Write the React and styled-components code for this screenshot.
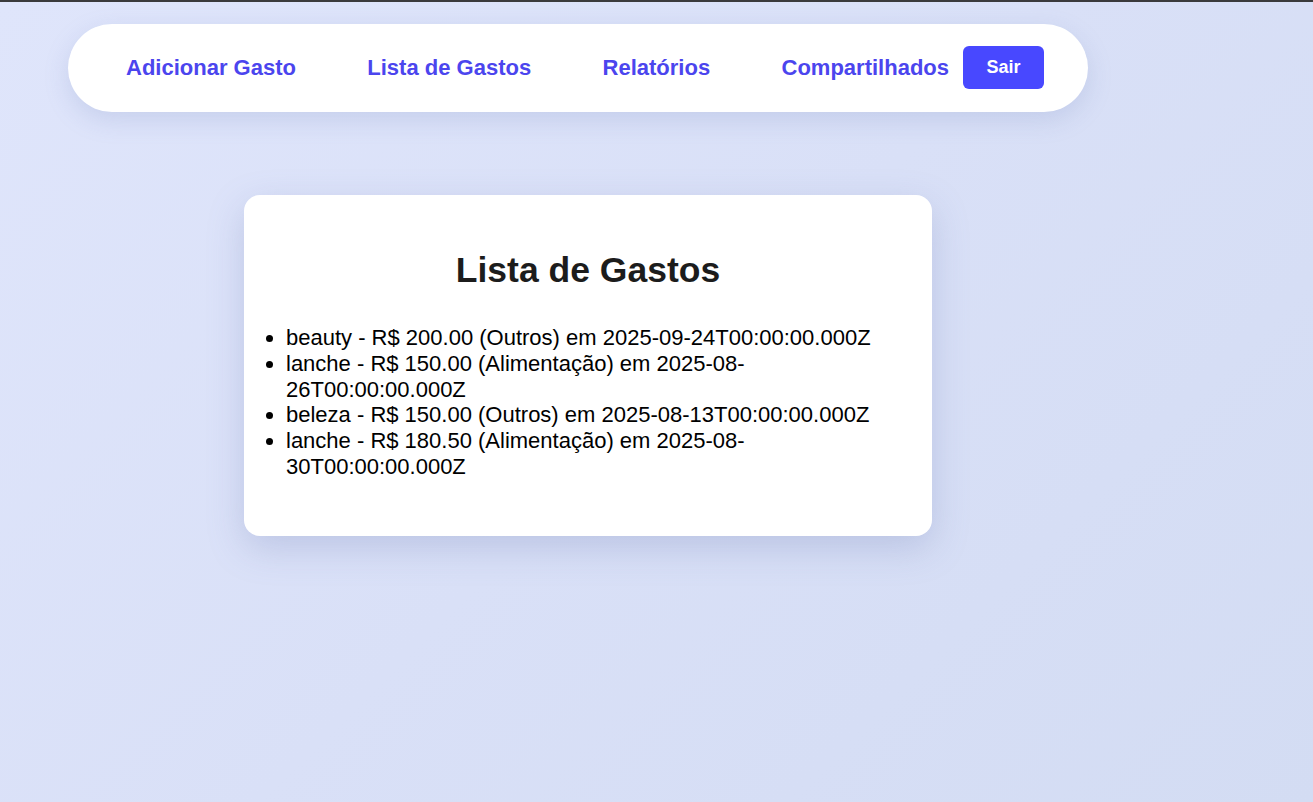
import React from "react";
import styled, { createGlobalStyle } from "styled-components";

const Global = createGlobalStyle`
  html, body { margin: 0; padding: 0; }
  body {
    min-height: 100vh;
    font-family: "Liberation Sans", Arial, sans-serif;
    background: linear-gradient(135deg, #dfe5fb 0%, #d9e0f7 50%, #d3dcf3 100%);
    background-attachment: fixed;
    border-top: 2px solid #3a3a3c;
    box-sizing: border-box;
  }
  * { box-sizing: border-box; }
`;

const Page = styled.div`
  width: 1040px;
  margin-left: 68px;
  padding-top: 22px;
`;

const Nav = styled.nav`
  display: inline-flex;
  align-items: center;
  height: 88px;
  padding: 0 44px 0 58px;
  background: #ffffff;
  border-radius: 44px;
  box-shadow: 0 8px 24px rgba(120, 135, 190, 0.22);
`;

const NavLink = styled.a`
  font-size: 22px;
  font-weight: 700;
  color: #4b45ee;
  text-decoration: none;
  margin-right: ${(p) => (p.$last ? "14px" : "71.4px")};
  cursor: pointer;
`;

const LogoutButton = styled.button`
  font-family: inherit;
  font-size: 18px;
  font-weight: 700;
  color: #ffffff;
  background: #4848ff;
  border: none;
  border-radius: 6px;
  width: 81px;
  height: 43px;
  padding: 0;
  margin-top: -1px;
  cursor: pointer;
`;

const Card = styled.section`
  width: 688px;
  margin: 83px auto 0;
  padding: 50px 42px 56px;
  background: #ffffff;
  border-radius: 16px;
  box-shadow: 0 12px 36px rgba(110, 125, 180, 0.28);
`;

const Title = styled.h2`
  margin: 0 0 30px;
  text-align: center;
  font-size: 35.5px;
  font-weight: 700;
  line-height: 50px;
  color: #1c1c1c;
`;

const List = styled.ul`
  margin: 0;
  padding: 0;
  list-style: disc outside;
`;

const Item = styled.li`
  font-size: 22px;
  line-height: 25.8px;
  color: #000;
`;

const gastos = [
  "beauty - R$ 200.00 (Outros) em 2025-09-24T00:00:00.000Z",
  "lanche - R$ 150.00 (Alimentação) em 2025-08-26T00:00:00.000Z",
  "beleza - R$ 150.00 (Outros) em 2025-08-13T00:00:00.000Z",
  "lanche - R$ 180.50 (Alimentação) em 2025-08-30T00:00:00.000Z",
];

export default function App() {
  return (
    <>
      <Global />
      <Page>
        <Nav>
          <NavLink>Adicionar Gasto</NavLink>
          <NavLink>Lista de Gastos</NavLink>
          <NavLink>Relatórios</NavLink>
          <NavLink $last>Compartilhados</NavLink>
          <LogoutButton>Sair</LogoutButton>
        </Nav>
        <Card>
          <Title>Lista de Gastos</Title>
          <List>
            {gastos.map((g, i) => (
              <Item key={i}>{g}</Item>
            ))}
          </List>
        </Card>
      </Page>
    </>
  );
}
